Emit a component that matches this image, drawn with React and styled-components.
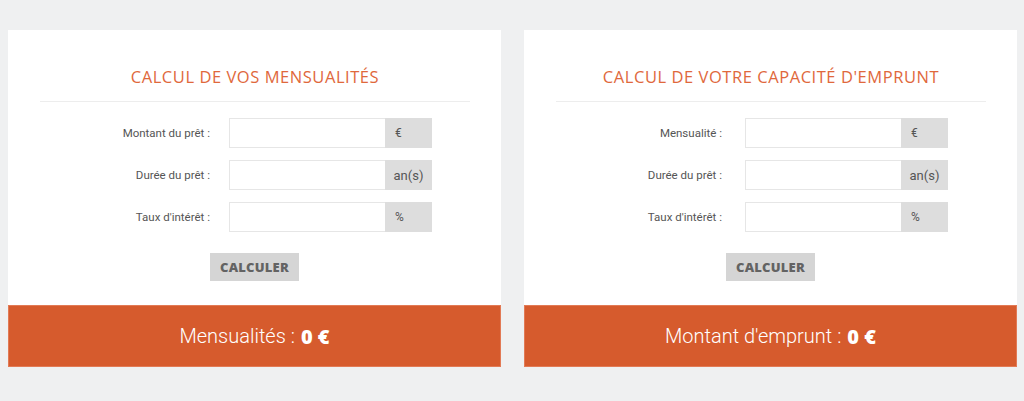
import React from "react";
import styled, { createGlobalStyle } from "styled-components";

const Global = createGlobalStyle`
  html, body { margin: 0; padding: 0; }
  body { background: #eff0f1; font-family: Roboto, "Liberation Sans", sans-serif; }
  * { box-sizing: border-box; }
`;

const Page = styled.div`
  display: flex;
  gap: 23px;
  padding: 30px 7px 34px 8px;
`;

const Card = styled.section`
  flex: 0 0 493px;
  background: #ffffff;
  display: flex;
  flex-direction: column;
`;

const Header = styled.div`
  margin: 0 31px 0 32px;
  padding: 37px 0 14px;
  border-bottom: 1px solid #ededed;
  text-align: center;
`;

const Title = styled.h2`
  margin: 0;
  font-family: "Open Sans", sans-serif;
  font-weight: 400;
  font-size: 16.5px;
  line-height: 20px;
  letter-spacing: 0.55px;
  color: #e0683c;
  text-transform: uppercase;
`;

const Form = styled.div`
  display: flex;
  flex-direction: column;
  gap: 12px;
  padding-top: 16px;
`;

const Row = styled.div`
  display: flex;
  align-items: center;
  height: 30px;
`;

const Label = styled.label`
  width: ${(p) => p.$labelEnd}px;
  text-align: right;
  font-size: 11.5px;
  color: #555555;
  font-weight: 400;
`;

const Group = styled.div`
  display: flex;
  margin-left: ${(p) => 221 - p.$labelEnd}px;
  height: 30px;
`;

const Input = styled.input`
  width: 156px;
  height: 30px;
  border: 1px solid #e6e6e6;
  border-right: none;
  outline: none;
  padding: 0 8px;
  font-family: Roboto, sans-serif;
  font-size: 13px;
  background: #fff;
`;

const Addon = styled.span`
  width: 47px;
  height: 30px;
  background: #dddddd;
  display: flex;
  align-items: center;
  padding-left: ${(p) => (p.$wide ? "0" : "10px")};
  justify-content: ${(p) => (p.$wide ? "center" : "flex-start")};
  font-size: ${(p) => (p.$wide ? "13px" : "12px")};
  color: #555555;
`;

const ButtonRow = styled.div`
  padding: 21px 0 24px 202px;
`;

const Button = styled.button`
  display: block;
  width: 89px;
  height: 28px;
  border: none;
  background: #d5d5d5;
  color: #636363;
  font-family: "Open Sans", sans-serif;
  font-weight: 800;
  font-size: 13px;
  letter-spacing: 0.2px;
  padding: 0;
  cursor: pointer;
`;

const Result = styled.div`
  height: 62px;
  background: #d65b2d;
  border: 1px solid #e27a55;
  display: flex;
  align-items: center;
  justify-content: center;
  color: #ffffff;
  font-family: Roboto, sans-serif;
  font-weight: 300;
  font-size: 20px;
`;

const Value = styled.strong`
  font-family: "Open Sans", sans-serif;
  font-weight: 800;
  margin-left: 6px;
`;

const Calculator = ({ title, labelEnd, fields, resultLabel }) => (
  <Card>
    <Header>
      <Title>{title}</Title>
    </Header>
    <Form>
      {fields.map((f) => (
        <Row key={f.label}>
          <Label $labelEnd={labelEnd}>{f.label}</Label>
          <Group $labelEnd={labelEnd}>
            <Input type="text" />
            <Addon $wide={f.unit === "an(s)"}>{f.unit}</Addon>
          </Group>
        </Row>
      ))}
    </Form>
    <ButtonRow>
      <Button>CALCULER</Button>
    </ButtonRow>
    <Result>
      {resultLabel} :<Value>0 €</Value>
    </Result>
  </Card>
);

export default function App() {
  return (
    <>
      <Global />
      <Page>
        <Calculator
          title="Calcul de vos mensualités"
          labelEnd={202}
          resultLabel="Mensualités"
          fields={[
            { label: "Montant du prêt :", unit: "€" },
            { label: "Durée du prêt :", unit: "an(s)" },
            { label: "Taux d'intérêt :", unit: "%" },
          ]}
        />
        <Calculator
          title="Calcul de votre capacité d'emprunt"
          labelEnd={198}
          resultLabel="Montant d'emprunt"
          fields={[
            { label: "Mensualité :", unit: "€" },
            { label: "Durée du prêt :", unit: "an(s)" },
            { label: "Taux d'intérêt :", unit: "%" },
          ]}
        />
      </Page>
    </>
  );
}
